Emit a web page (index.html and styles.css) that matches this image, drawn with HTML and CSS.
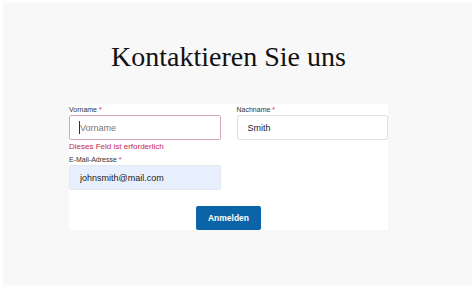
FILE: index.html
```html
<!DOCTYPE html>
<html lang="de">
<head>
    <meta charset="UTF-8">
    <meta name="viewport" content="width=device-width, initial-scale=1.0">
    <title>Kontaktieren Sie uns</title>
    <link rel="stylesheet" href="styles.css">
</head>
<body>
    <div class="page">
        <div class="container">
            <h1 class="title">Kontaktieren Sie uns</h1>

            <form class="contact-form" onsubmit="return false">
                <div class="form-grid">
                    <div class="field">
                        <label for="firstName">Vorname <span class="req">*</span></label>
                        <div class="input-wrap">
                            <input id="firstName" class="text-input invalid" type="text" placeholder="Vorname">
                            <span class="caret"></span>
                        </div>
                        <div class="error">Dieses Feld ist erforderlich</div>
                    </div>
                    <div class="field">
                        <label for="lastName">Nachname <span class="req">*</span></label>
                        <input id="lastName" class="text-input" type="text" value="Smith">
                    </div>
                    <div class="field">
                        <label for="email">E-Mail-Adresse <span class="req">*</span></label>
                        <input id="email" class="text-input autofilled" type="email" value="johnsmith@mail.com">
                    </div>
                </div>

                <div class="actions">
                    <button class="submit-btn" type="submit">Anmelden</button>
                </div>
            </form>
        </div>
    </div>
</body>
</html>
```

FILE: styles.css
```css
* {
    margin: 0;
    padding: 0;
    box-sizing: border-box;
}

body {
    font-family: 'Liberation Sans', Arial, sans-serif;
    background: #ffffff;
    padding: 3px 2px 3px 3px;
}

.page {
    background: #f8f8f8;
    height: 282px;
    padding-top: 38px;
}

.container {
    width: 319px;
    margin-left: 66px;
}

.title {
    font-family: 'Liberation Serif', 'Times New Roman', serif;
    font-weight: 400;
    font-size: 28px;
    line-height: 32px;
    color: #111;
    text-align: center;
    margin-bottom: 31px;
}

.contact-form {
    background: #ffffff;
}

.form-grid {
    display: grid;
    grid-template-columns: 1fr 1fr;
    column-gap: 16px;
}

.field label {
    display: block;
    font-size: 7px;
    line-height: 11px;
    color: #333;
}

.req {
    color: #c8254d;
}

.input-wrap {
    position: relative;
}

.text-input {
    display: block;
    width: 100%;
    height: 25px;
    padding: 0 10px;
    border: 1px solid #e0e0e0;
    border-radius: 2px;
    background: #ffffff;
    font-family: 'Liberation Sans', Arial, sans-serif;
    font-size: 9px;
    color: #222;
    outline: none;
}

.text-input::placeholder {
    color: #777;
}

.text-input.invalid {
    border-color: #d9a7b2;
}

.text-input.autofilled {
    background: #e8f0fe;
    border-color: #e4e8ef;
}

.caret {
    position: absolute;
    left: 10px;
    top: 6px;
    width: 1px;
    height: 13px;
    background: #333;
}

.error {
    font-size: 8px;
    line-height: 13px;
    color: #c8254d;
    margin-bottom: 1px;
}

.actions {
    display: flex;
    justify-content: center;
    padding-top: 16px;
}

.submit-btn {
    width: 65px;
    height: 24px;
    background: #0b64a8;
    color: #ffffff;
    border: none;
    border-radius: 2px;
    font-family: 'Liberation Sans', Arial, sans-serif;
    font-size: 8.5px;
    font-weight: 700;
    cursor: pointer;
}
```
